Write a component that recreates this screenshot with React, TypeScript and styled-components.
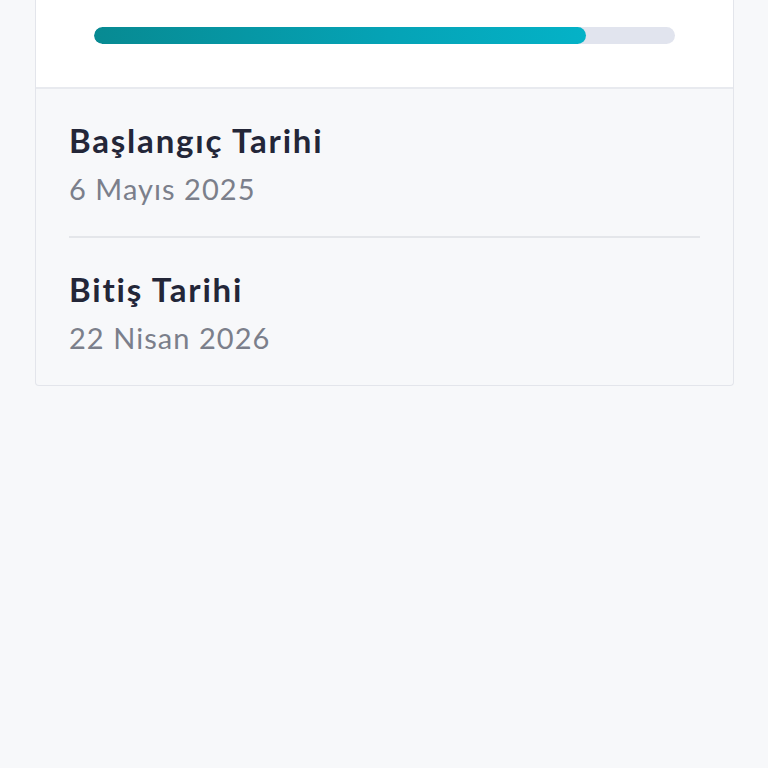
import React from 'react'
import styled, { createGlobalStyle } from 'styled-components'

const GlobalStyle = createGlobalStyle`
  html, body {
    margin: 0;
    padding: 0;
    background: #f7f8fa;
    font-family: Lato, "Noto Sans", sans-serif;
  }
`

const Page = styled.div`
  min-height: 768px;
  padding: 0 34px 0 35px;
  background: #f7f8fa;
`

const Card = styled.section`
  border: 1px solid #e3e5eb;
  border-top: none;
  border-radius: 0 0 4px 4px;
  background: #f7f8fa;
  overflow: hidden;
`

const ProgressArea = styled.div`
  background: #ffffff;
  padding: 27px 58px 43px;
  border-bottom: 2px solid #e8eaef;
`

const Track = styled.div`
  height: 17px;
  border-radius: 9px;
  background: #e1e4ee;
  overflow: hidden;
`

const Fill = styled.div`
  height: 100%;
  border-radius: 9px;
  background: linear-gradient(90deg, #078a92 0%, #05a3b6 60%, #04b2c7 100%);
`

const DateList = styled.div`
  padding: 0 33px;
`

const DateItem = styled.div<{ $last?: boolean }>`
  padding: 31px 0 27px;
  border-bottom: ${p => (p.$last ? 'none' : '2px solid #e4e6ea')};
`

const Label = styled.div`
  font-size: 33px;
  line-height: 40px;
  font-weight: 700;
  letter-spacing: 1.8px;
  color: #232638;
`

const Value = styled.div`
  margin-top: 9px;
  font-size: 29px;
  line-height: 40px;
  font-weight: 400;
  letter-spacing: 1.05px;
  color: #7b7f8b;
`

const dates = [
  { label: 'Başlangıç Tarihi', value: '6 Mayıs 2025' },
  { label: 'Bitiş Tarihi', value: '22 Nisan 2026' }
]

const App = () => {
  const progress = 84.7
  return (
    <Page>
      <GlobalStyle />
      <Card>
        <ProgressArea>
          <Track>
            <Fill style={{ width: `${progress}%` }} />
          </Track>
        </ProgressArea>
        <DateList>
          {dates.map((d, i) => (
            <DateItem key={d.label} $last={i === dates.length - 1}>
              <Label>{d.label}</Label>
              <Value>{d.value}</Value>
            </DateItem>
          ))}
        </DateList>
      </Card>
    </Page>
  )
}

export default App
